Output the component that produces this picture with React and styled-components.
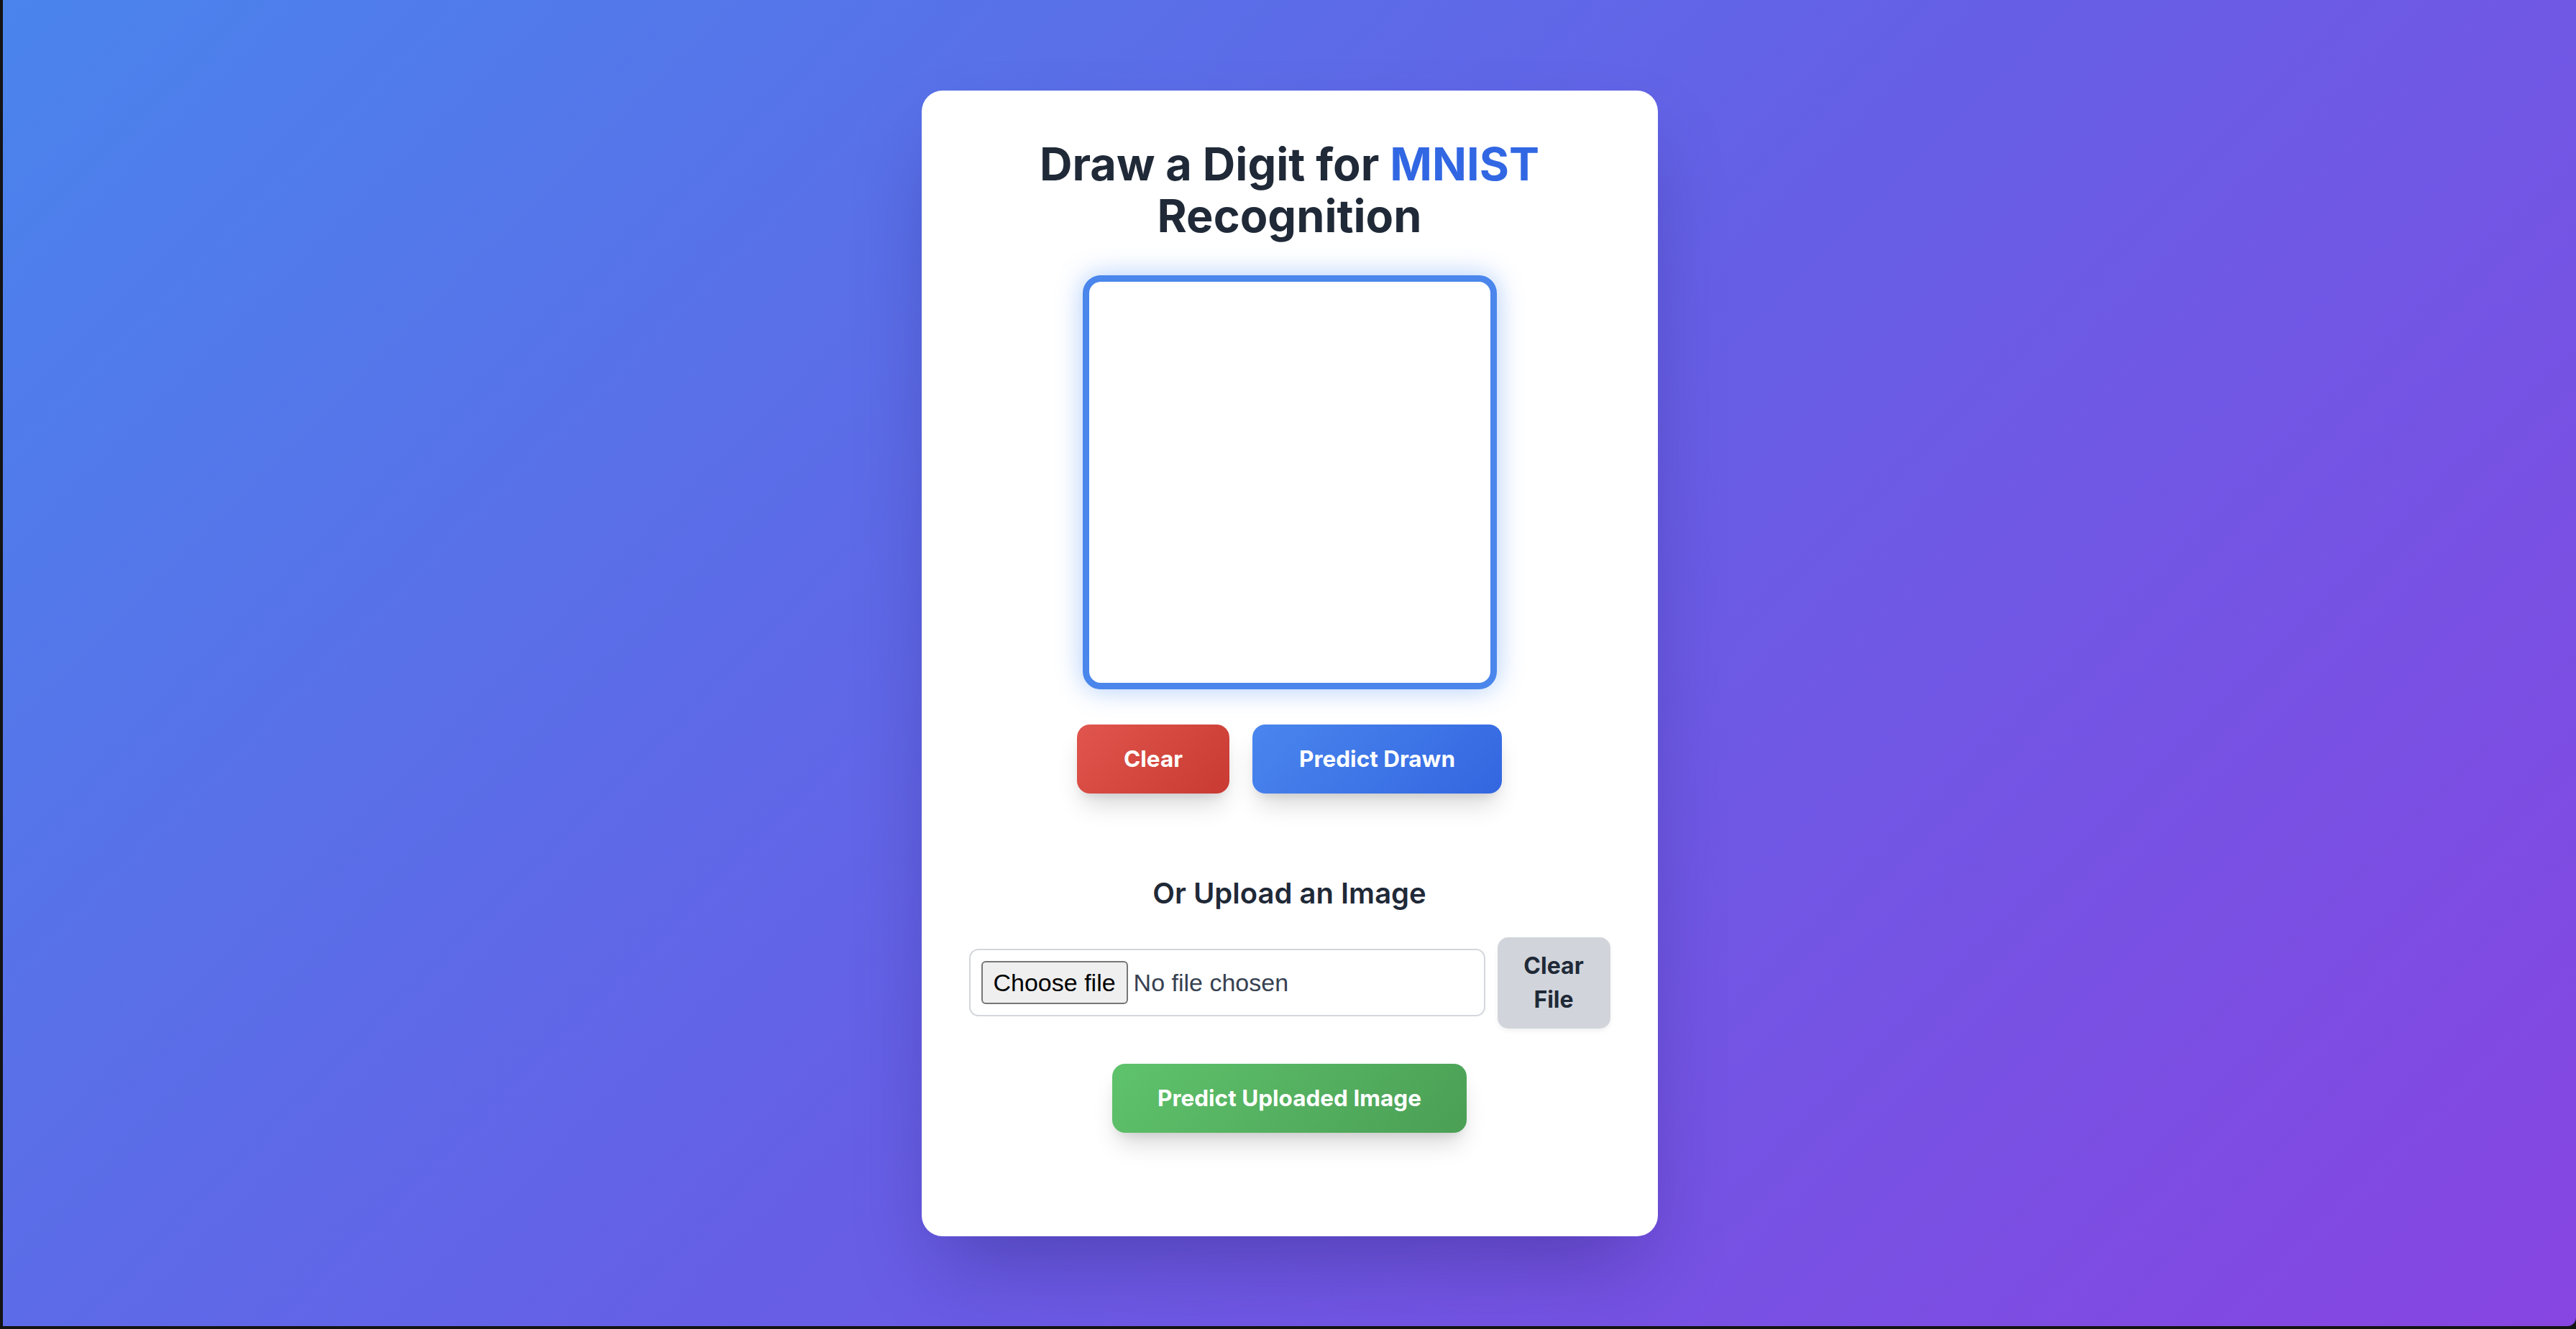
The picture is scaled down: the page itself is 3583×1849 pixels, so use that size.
import React, { useRef } from "react";
import styled, { createGlobalStyle } from "styled-components";

const Global = createGlobalStyle`
  html, body {
    margin: 0;
    padding: 0;
    background: #141414;
  }
  body {
    font-family: Inter, "Noto Sans", sans-serif;
  }
  * { box-sizing: border-box; }
`;

const Page = styled.div`
  min-height: 1845px;
  margin-left: 4px;
  background: linear-gradient(135deg, #4a84ec 0%, #6560e6 50%, #8745e1 100%);
  border-bottom-right-radius: 12px;
  display: flex;
  align-items: center;
  justify-content: center;
`;

const Card = styled.main`
  width: 1024px;
  background: #ffffff;
  border-radius: 29px;
  padding: 66px 66px 144px;
  box-shadow: 0 57px 114px -27px rgba(30, 20, 90, 0.35);
  display: flex;
  flex-direction: column;
  align-items: center;
`;

const Title = styled.h1`
  margin: 0 0 47px;
  font-family: Inter, sans-serif;
  font-weight: 700;
  font-size: 63px;
  line-height: 72px;
  color: #1f2937;
  text-align: center;
  width: 780px;
`;

const Accent = styled.span`
  color: #3267e3;
`;

const DrawCanvas = styled.canvas`
  display: block;
  width: 576px;
  height: 576px;
  border: 9px solid #4a86ec;
  border-radius: 25px;
  background: #ffffff;
  box-shadow: 0 0 36px rgba(59, 130, 246, 0.42);
  margin-bottom: 49px;
`;

const ButtonRow = styled.div`
  display: flex;
  gap: 32px;
  justify-content: center;
`;

const gradients = {
  red: "linear-gradient(135deg, #e0554d 0%, #c83a32 100%)",
  blue: "linear-gradient(135deg, #4a86ee 0%, #3366e0 100%)",
  green: "linear-gradient(135deg, #5fc36c 0%, #4a9f55 100%)",
};

const ActionButton = styled.button`
  height: 96px;
  padding: 0 ${(p) => p.$pad || 65}px;
  border: none;
  border-radius: 18px;
  background: ${(p) => gradients[p.$tone]};
  color: #ffffff;
  font-family: Inter, sans-serif;
  font-weight: 700;
  font-size: 31.5px;
  white-space: nowrap;
  cursor: pointer;
  box-shadow: 0 22px 34px -8px rgba(0, 0, 0, 0.16), 0 8px 14px -6px rgba(0, 0, 0, 0.1);
`;

const UploadSection = styled.section`
  margin-top: 107px;
  width: 100%;
  display: flex;
  flex-direction: column;
  align-items: center;
`;

const SubTitle = styled.h2`
  margin: 0 0 29px;
  font-family: Inter, sans-serif;
  font-weight: 600;
  font-size: 40px;
  line-height: 64px;
  color: #1f2937;
`;

const UploadRow = styled.div`
  width: 100%;
  display: flex;
  align-items: center;
  gap: 17px;
  margin-bottom: 49px;
`;

const FileBox = styled.label`
  flex: 1;
  height: 94px;
  display: flex;
  align-items: center;
  gap: 8px;
  padding: 0 15px;
  border: 2px solid #d3d6dc;
  border-radius: 13px;
  background: #ffffff;
  cursor: pointer;
`;

const HiddenInput = styled.input`
  display: none;
`;

const ChooseButton = styled.span`
  height: 60px;
  padding: 0 15px;
  display: flex;
  align-items: center;
  border: 2px solid #767676;
  border-radius: 6px;
  background: #efefef;
  color: #000000;
  font-family: "Liberation Sans", Arial, sans-serif;
  font-size: 34px;
`;

const FileStatus = styled.span`
  color: #374151;
  font-family: "Liberation Sans", Arial, sans-serif;
  font-size: 34px;
`;

const ClearFileButton = styled.button`
  width: 157px;
  height: 127px;
  border: none;
  border-radius: 15px;
  background: #d1d5db;
  color: #1f2937;
  font-family: Inter, sans-serif;
  font-weight: 700;
  font-size: 32px;
  line-height: 47px;
  text-align: center;
  padding: 0 28px;
  cursor: pointer;
  box-shadow: 0 3px 6px rgba(0, 0, 0, 0.06);
`;

export default function App() {
  const canvasRef = useRef(null);
  return (
    <>
      <Global />
      <Page>
        <Card>
          <Title>
            Draw a Digit for <Accent>MNIST</Accent> Recognition
          </Title>
          <DrawCanvas ref={canvasRef} width={558} height={558} />
          <ButtonRow>
            <ActionButton $tone="red">Clear</ActionButton>
            <ActionButton $tone="blue">Predict Drawn</ActionButton>
          </ButtonRow>
          <UploadSection>
            <SubTitle>Or Upload an Image</SubTitle>
            <UploadRow>
              <FileBox>
                <HiddenInput type="file" accept="image/*" />
                <ChooseButton>Choose file</ChooseButton>
                <FileStatus>No file chosen</FileStatus>
              </FileBox>
              <ClearFileButton>Clear File</ClearFileButton>
            </UploadRow>
            <ActionButton $tone="green" $pad={63}>Predict Uploaded Image</ActionButton>
          </UploadSection>
        </Card>
      </Page>
    </>
  );
}
